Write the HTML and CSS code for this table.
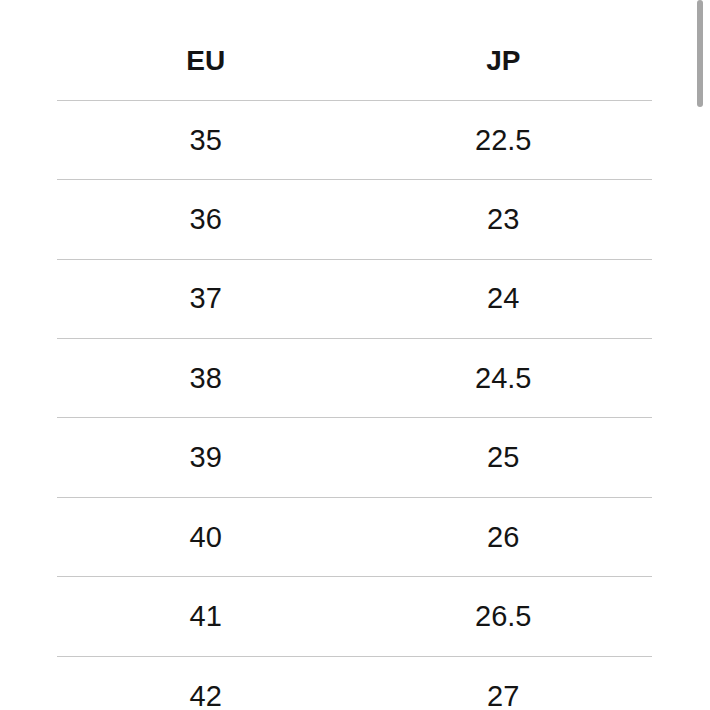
FILE: index.html
```html
<!DOCTYPE html>
<html>
<head>
<meta charset="utf-8">
<link rel="stylesheet" href="styles.css">
</head>
<body>
<div class="page">
  <div class="table">
    <div class="row head"><div class="cell">EU</div><div class="cell">JP</div></div>
    <div class="row"><div class="cell">35</div><div class="cell">22.5</div></div>
    <div class="row"><div class="cell">36</div><div class="cell">23</div></div>
    <div class="row"><div class="cell">37</div><div class="cell">24</div></div>
    <div class="row"><div class="cell">38</div><div class="cell">24.5</div></div>
    <div class="row"><div class="cell">39</div><div class="cell">25</div></div>
    <div class="row"><div class="cell">40</div><div class="cell">26</div></div>
    <div class="row"><div class="cell">41</div><div class="cell">26.5</div></div>
    <div class="row"><div class="cell">42</div><div class="cell">27</div></div>
  </div>
  <div class="scrollbar"></div>
</div>
</body>
</html>
```
FILE: styles.css
```css
html, body {
  margin: 0;
  padding: 0;
  background: #ffffff;
}
.page {
  position: relative;
  width: 710px;
  height: 710px;
  overflow: hidden;
  font-family: "Liberation Sans", Arial, sans-serif;
  color: #141414;
}
.table {
  margin: 21.5px 0 0 57px;
  width: 595px;
  display: flex;
  flex-direction: column;
}
.row {
  display: grid;
  grid-template-columns: 1fr 1fr;
  height: 79.4px;
  box-sizing: border-box;
  border-bottom: 1.5px solid #c8c8c8;
  align-items: center;
}
.row:last-child {
  border-bottom: none;
}
.cell {
  text-align: center;
  font-size: 29px;
  line-height: 1;
}
.head .cell {
  font-weight: bold;
  font-size: 28px;
}
.scrollbar {
  position: absolute;
  top: 0;
  left: 697px;
  width: 6px;
  height: 107px;
  border-radius: 3px;
  background: #a6a6a6;
}
```
